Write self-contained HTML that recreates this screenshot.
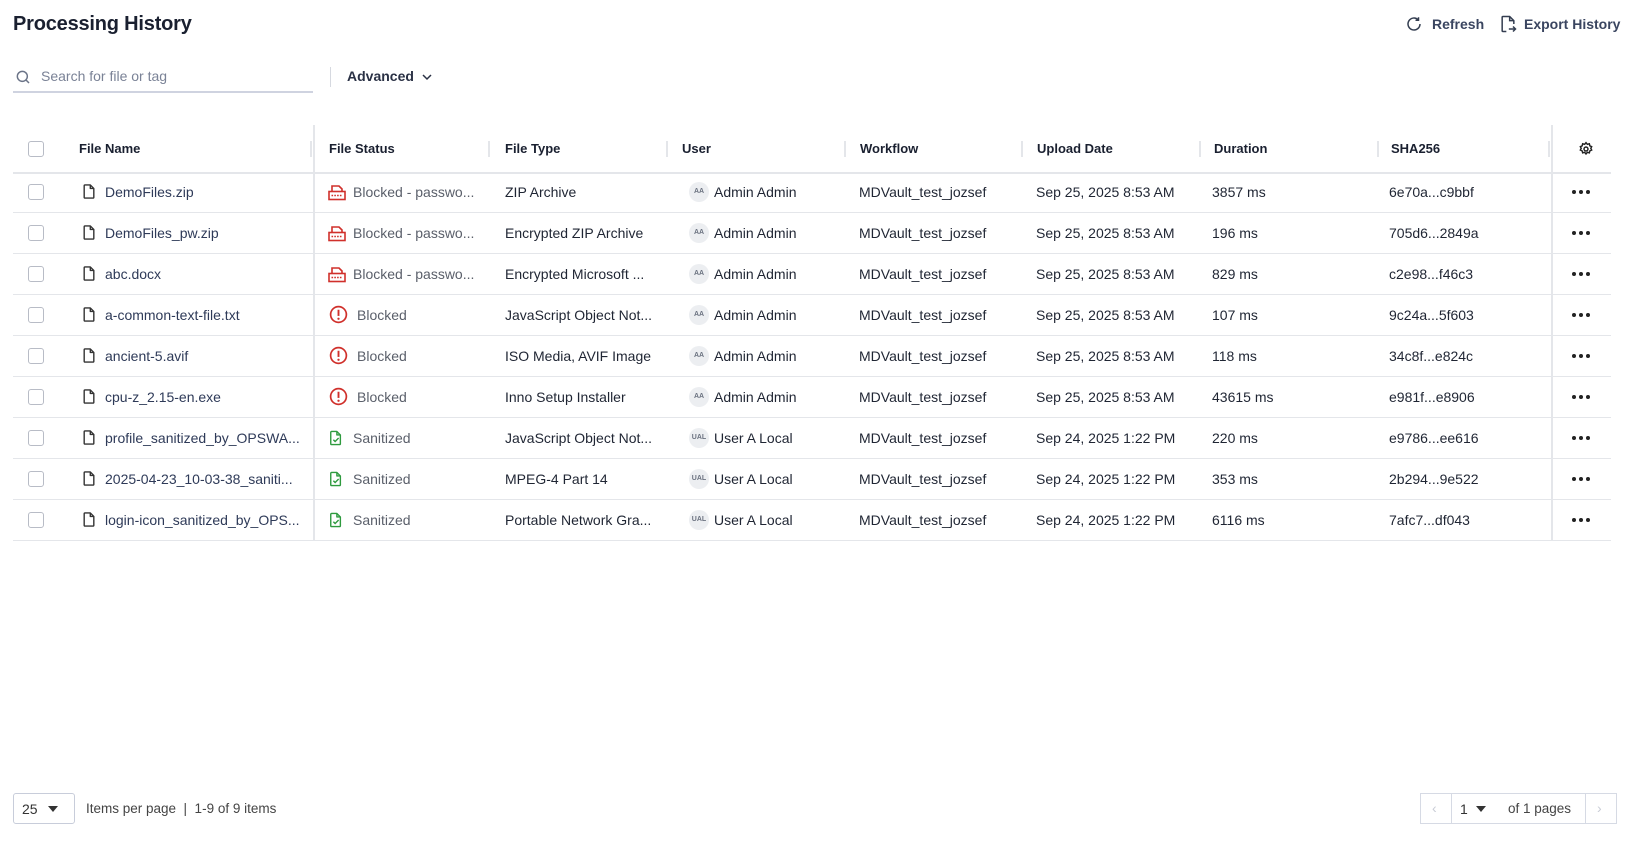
<!DOCTYPE html>
<html><head><meta charset="utf-8"><style>
*{box-sizing:border-box;margin:0;padding:0}
body{width:1630px;height:856px;background:#fff;font-family:"Liberation Sans",Arial,sans-serif;color:#1f2533;position:relative;overflow:hidden}
.a{position:absolute;white-space:nowrap}
h1{position:absolute;left:13px;top:13px;font-size:20px;font-weight:bold;color:#1a2030;letter-spacing:-0.2px}
.hd{font-size:13px;font-weight:bold;color:#1a2030}
.row{position:absolute;left:13px;width:1598px;height:41px;border-bottom:1.5px solid #e4e6ea;font-size:14px}
.row .a{top:12px}
.cb{position:absolute;width:16px;height:16px;border:1.3px solid #b8bcc6;border-radius:3px}
.fn{color:#2e3a58}
.st{color:#5a5f6a}
.av{position:absolute;top:10px;left:676px;width:20px;height:20px;border-radius:50%;background:#eceef1;font-size:7px;font-weight:bold;color:#6b7280;text-align:center;line-height:20px}
.dots{position:absolute;left:1559px;top:18px;display:flex;gap:3px}
.dots i{display:block;width:4px;height:4px;border-radius:50%;background:#222}
.sep{position:absolute;top:141px;width:2px;height:16px;background:#e4e6ea}
</style></head><body>
<h1>Processing History</h1>
<svg class="a" style="left:1405px;top:15px" width="18" height="18" viewBox="0 0 24 24" fill="none" stroke="#333d50" stroke-width="2"><path d="M20 12a8 8 0 1 1-2.4-5.7"/><path d="M18 3v4h-4"/></svg>
<div class="a" style="left:1432px;top:16px;font-size:14px;font-weight:bold;color:#3a4560">Refresh</div>
<svg class="a" style="left:1498px;top:14px" width="20" height="20" viewBox="0 0 24 24" fill="none" stroke="#333d50" stroke-width="1.8"><path d="M10 21H6a1 1 0 0 1-1-1V4a1 1 0 0 1 1-1h8l5 5v4"/><path d="M14 3v5h5"/><path d="M13 18h8M18 15l3 3-3 3"/></svg>
<div class="a" style="left:1524px;top:16px;font-size:14px;font-weight:bold;color:#3a4560">Export History</div>

<svg class="a" style="left:15px;top:69px" width="16" height="16" viewBox="0 0 24 24" fill="none" stroke="#6b7488" stroke-width="2.2"><circle cx="11" cy="11" r="7.5"/><path d="M16.5 16.5L21 21"/></svg>
<div class="a" style="left:41px;top:68px;font-size:14px;color:#7a8296">Search for file or tag</div>
<div class="a" style="left:13px;top:91px;width:300px;height:1.5px;background:#cfd3e0"></div>
<div class="a" style="left:330px;top:67px;width:1px;height:20px;background:#d6d9e0"></div>
<div class="a" style="left:347px;top:68px;font-size:14px;font-weight:bold;color:#2a3145">Advanced</div>
<svg class="a" style="left:421px;top:72px" width="12" height="10" viewBox="0 0 12 10" fill="none" stroke="#2a3145" stroke-width="1.5"><path d="M2 3l4 4 4-4"/></svg>

<div class="a" style="left:313px;top:125px;width:1.5px;height:416px;background:#e4e6ea"></div>
<div class="a" style="left:1551px;top:125px;width:1.5px;height:416px;background:#e4e6ea"></div>
<div class="a" style="left:13px;top:172px;width:1598px;height:1.5px;background:#e4e6ea"></div>
<div class="cb" style="left:28px;top:141px"></div>
<div class="a hd" style="left:79px;top:141px">File Name</div>
<div class="sep" style="left:310px"></div>
<div class="a hd" style="left:329px;top:141px">File Status</div>
<div class="sep" style="left:488px"></div>
<div class="a hd" style="left:505px;top:141px">File Type</div>
<div class="sep" style="left:666px"></div>
<div class="a hd" style="left:682px;top:141px">User</div>
<div class="sep" style="left:844px"></div>
<div class="a hd" style="left:860px;top:141px">Workflow</div>
<div class="sep" style="left:1021px"></div>
<div class="a hd" style="left:1037px;top:141px">Upload Date</div>
<div class="sep" style="left:1199px"></div>
<div class="a hd" style="left:1214px;top:141px">Duration</div>
<div class="sep" style="left:1377px"></div>
<div class="a hd" style="left:1391px;top:141px">SHA256</div>
<div class="sep" style="left:1548px"></div>
<svg class="a" style="left:1578px;top:141px" width="16" height="16" viewBox="0 0 24 24" fill="none" stroke="#222" stroke-width="2.2"><circle cx="12" cy="12" r="3"/><path d="M12 2.5l2 2.5 3-.8.8 3 2.7 1.3-1.3 2.5 1.3 2.5-2.7 1.3-.8 3-3-.8-2 2.5-2-2.5-3 .8-.8-3-2.7-1.3 1.3-2.5-1.3-2.5 2.7-1.3.8-3 3 .8z"/></svg>

<svg width="0" height="0" style="position:absolute"><defs>
<symbol id="file" viewBox="0 0 16 18"><path d="M2.5 2.5a1 1 0 0 1 1-1h6l4 4v10a1 1 0 0 1-1 1h-9a1 1 0 0 1-1-1z M9.5 1.5v4h4" fill="none" stroke="#333" stroke-width="1.6" stroke-linejoin="round"/></symbol>
<symbol id="lock" viewBox="0 0 18 18"><path d="M4 8V3h7l3 3v2" fill="none" stroke="#d0302b" stroke-width="1.6"/><rect x="1" y="8.5" width="16" height="8" fill="none" stroke="#d0302b" stroke-width="1.6"/><path d="M3.5 12.5h11" stroke="#d0302b" stroke-width="1.6" stroke-dasharray="1.6 1.2"/></symbol>
<symbol id="blk" viewBox="0 0 20 20"><circle cx="10" cy="10" r="8.3" fill="none" stroke="#d0302b" stroke-width="1.8"/><path d="M10 5v6.5" stroke="#d0302b" stroke-width="2"/><circle cx="10" cy="14.5" r="1.2" fill="#d0302b"/></symbol>
<symbol id="san" viewBox="0 0 16 18"><path d="M2 2.5a1 1 0 0 1 1-1h6l4 4v10a1 1 0 0 1-1 1H3a1 1 0 0 1-1-1z M9 1.5v4h4" fill="none" stroke="#2e9a3e" stroke-width="1.6" stroke-linejoin="round"/><path d="M5 11l2 2 4-4" fill="none" stroke="#2e9a3e" stroke-width="1.6"/></symbol>
</defs></svg>

<div class="row" style="top:172px"><div class="cb" style="left:15px;top:12px"></div><svg class="a" style="left:69px;top:11px" width="14" height="17"><use href="#file"/></svg><div class="a fn" style="left:92px">DemoFiles.zip</div><svg class="a" style="left:315px;top:11px" width="18" height="18"><use href="#lock"/></svg><div class="a st" style="left:340px">Blocked - passwo...</div><div class="a" style="left:492px">ZIP Archive</div><div class="av">AA</div><div class="a" style="left:701px">Admin Admin</div><div class="a" style="left:846px">MDVault_test_jozsef</div><div class="a" style="left:1023px">Sep 25, 2025 8:53 AM</div><div class="a" style="left:1199px">3857 ms</div><div class="a" style="left:1376px">6e70a...c9bbf</div><div class="dots"><i></i><i></i><i></i></div></div>
<div class="row" style="top:213px"><div class="cb" style="left:15px;top:12px"></div><svg class="a" style="left:69px;top:11px" width="14" height="17"><use href="#file"/></svg><div class="a fn" style="left:92px">DemoFiles_pw.zip</div><svg class="a" style="left:315px;top:11px" width="18" height="18"><use href="#lock"/></svg><div class="a st" style="left:340px">Blocked - passwo...</div><div class="a" style="left:492px">Encrypted ZIP Archive</div><div class="av">AA</div><div class="a" style="left:701px">Admin Admin</div><div class="a" style="left:846px">MDVault_test_jozsef</div><div class="a" style="left:1023px">Sep 25, 2025 8:53 AM</div><div class="a" style="left:1199px">196 ms</div><div class="a" style="left:1376px">705d6...2849a</div><div class="dots"><i></i><i></i><i></i></div></div>
<div class="row" style="top:254px"><div class="cb" style="left:15px;top:12px"></div><svg class="a" style="left:69px;top:11px" width="14" height="17"><use href="#file"/></svg><div class="a fn" style="left:92px">abc.docx</div><svg class="a" style="left:315px;top:11px" width="18" height="18"><use href="#lock"/></svg><div class="a st" style="left:340px">Blocked - passwo...</div><div class="a" style="left:492px">Encrypted Microsoft ...</div><div class="av">AA</div><div class="a" style="left:701px">Admin Admin</div><div class="a" style="left:846px">MDVault_test_jozsef</div><div class="a" style="left:1023px">Sep 25, 2025 8:53 AM</div><div class="a" style="left:1199px">829 ms</div><div class="a" style="left:1376px">c2e98...f46c3</div><div class="dots"><i></i><i></i><i></i></div></div>
<div class="row" style="top:295px"><div class="cb" style="left:15px;top:12px"></div><svg class="a" style="left:69px;top:11px" width="14" height="17"><use href="#file"/></svg><div class="a fn" style="left:92px">a-common-text-file.txt</div><svg class="a" style="left:316px;top:10px" width="19" height="19"><use href="#blk"/></svg><div class="a st" style="left:344px">Blocked</div><div class="a" style="left:492px">JavaScript Object Not...</div><div class="av">AA</div><div class="a" style="left:701px">Admin Admin</div><div class="a" style="left:846px">MDVault_test_jozsef</div><div class="a" style="left:1023px">Sep 25, 2025 8:53 AM</div><div class="a" style="left:1199px">107 ms</div><div class="a" style="left:1376px">9c24a...5f603</div><div class="dots"><i></i><i></i><i></i></div></div>
<div class="row" style="top:336px"><div class="cb" style="left:15px;top:12px"></div><svg class="a" style="left:69px;top:11px" width="14" height="17"><use href="#file"/></svg><div class="a fn" style="left:92px">ancient-5.avif</div><svg class="a" style="left:316px;top:10px" width="19" height="19"><use href="#blk"/></svg><div class="a st" style="left:344px">Blocked</div><div class="a" style="left:492px">ISO Media, AVIF Image</div><div class="av">AA</div><div class="a" style="left:701px">Admin Admin</div><div class="a" style="left:846px">MDVault_test_jozsef</div><div class="a" style="left:1023px">Sep 25, 2025 8:53 AM</div><div class="a" style="left:1199px">118 ms</div><div class="a" style="left:1376px">34c8f...e824c</div><div class="dots"><i></i><i></i><i></i></div></div>
<div class="row" style="top:377px"><div class="cb" style="left:15px;top:12px"></div><svg class="a" style="left:69px;top:11px" width="14" height="17"><use href="#file"/></svg><div class="a fn" style="left:92px">cpu-z_2.15-en.exe</div><svg class="a" style="left:316px;top:10px" width="19" height="19"><use href="#blk"/></svg><div class="a st" style="left:344px">Blocked</div><div class="a" style="left:492px">Inno Setup Installer</div><div class="av">AA</div><div class="a" style="left:701px">Admin Admin</div><div class="a" style="left:846px">MDVault_test_jozsef</div><div class="a" style="left:1023px">Sep 25, 2025 8:53 AM</div><div class="a" style="left:1199px">43615 ms</div><div class="a" style="left:1376px">e981f...e8906</div><div class="dots"><i></i><i></i><i></i></div></div>
<div class="row" style="top:418px"><div class="cb" style="left:15px;top:12px"></div><svg class="a" style="left:69px;top:11px" width="14" height="17"><use href="#file"/></svg><div class="a fn" style="left:92px">profile_sanitized_by_OPSWA...</div><svg class="a" style="left:316px;top:12px" width="14" height="16"><use href="#san"/></svg><div class="a st" style="left:340px">Sanitized</div><div class="a" style="left:492px">JavaScript Object Not...</div><div class="av">UAL</div><div class="a" style="left:701px">User A Local</div><div class="a" style="left:846px">MDVault_test_jozsef</div><div class="a" style="left:1023px">Sep 24, 2025 1:22 PM</div><div class="a" style="left:1199px">220 ms</div><div class="a" style="left:1376px">e9786...ee616</div><div class="dots"><i></i><i></i><i></i></div></div>
<div class="row" style="top:459px"><div class="cb" style="left:15px;top:12px"></div><svg class="a" style="left:69px;top:11px" width="14" height="17"><use href="#file"/></svg><div class="a fn" style="left:92px">2025-04-23_10-03-38_saniti...</div><svg class="a" style="left:316px;top:12px" width="14" height="16"><use href="#san"/></svg><div class="a st" style="left:340px">Sanitized</div><div class="a" style="left:492px">MPEG-4 Part 14</div><div class="av">UAL</div><div class="a" style="left:701px">User A Local</div><div class="a" style="left:846px">MDVault_test_jozsef</div><div class="a" style="left:1023px">Sep 24, 2025 1:22 PM</div><div class="a" style="left:1199px">353 ms</div><div class="a" style="left:1376px">2b294...9e522</div><div class="dots"><i></i><i></i><i></i></div></div>
<div class="row" style="top:500px"><div class="cb" style="left:15px;top:12px"></div><svg class="a" style="left:69px;top:11px" width="14" height="17"><use href="#file"/></svg><div class="a fn" style="left:92px">login-icon_sanitized_by_OPS...</div><svg class="a" style="left:316px;top:12px" width="14" height="16"><use href="#san"/></svg><div class="a st" style="left:340px">Sanitized</div><div class="a" style="left:492px">Portable Network Gra...</div><div class="av">UAL</div><div class="a" style="left:701px">User A Local</div><div class="a" style="left:846px">MDVault_test_jozsef</div><div class="a" style="left:1023px">Sep 24, 2025 1:22 PM</div><div class="a" style="left:1199px">6116 ms</div><div class="a" style="left:1376px">7afc7...df043</div><div class="dots"><i></i><i></i><i></i></div></div>

<div class="a" style="left:13px;top:793px;width:62px;height:31px;border:1.3px solid #c8cdda;border-radius:3px"></div>
<div class="a" style="left:22px;top:801px;font-size:14px;color:#333">25</div>
<div class="a" style="left:48px;top:806px;width:0;height:0;border-left:5px solid transparent;border-right:5px solid transparent;border-top:6px solid #333"></div>
<div class="a" style="left:86px;top:801px;font-size:13.5px;color:#444">Items per page &nbsp;|&nbsp; 1-9 of 9 items</div>
<div class="a" style="left:1420px;top:793px;width:197px;height:31px;border:1.3px solid #d6dae4"></div>
<div class="a" style="left:1451px;top:793px;width:1px;height:31px;background:#d6dae4"></div>
<div class="a" style="left:1585px;top:793px;width:1px;height:31px;background:#d6dae4"></div>
<div class="a" style="left:1432px;top:800px;font-size:14px;color:#c8ccd6">&#x2039;</div>
<div class="a" style="left:1597px;top:800px;font-size:14px;color:#c8ccd6">&#x203A;</div>
<div class="a" style="left:1460px;top:801px;font-size:14px;color:#333">1</div>
<div class="a" style="left:1476px;top:806px;width:0;height:0;border-left:5px solid transparent;border-right:5px solid transparent;border-top:6px solid #333"></div>
<div class="a" style="left:1508px;top:801px;font-size:13.5px;color:#444">of 1 pages</div>
</body></html>
